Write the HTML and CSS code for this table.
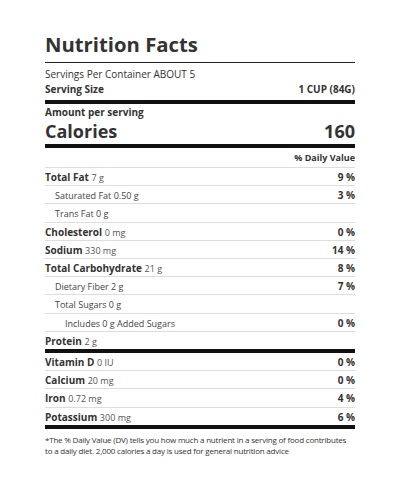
FILE: index.html
```html
<!DOCTYPE html>
<html>
<head>
<meta charset="utf-8">
<link rel="stylesheet" href="styles.css">
</head>
<body>
<div class="label">
  <h1 class="title">Nutrition Facts</h1>
  <div class="servings">Servings Per Container ABOUT 5</div>
  <div class="serving-size"><span>Serving Size</span><span>1 CUP (84G)</span></div>
  <div class="amount">Amount per serving</div>
  <div class="calories"><span>Calories</span><span>160</span></div>
  <div class="dv-head">% Daily Value</div>
  <div class="row"><span><b>Total Fat</b> <span class="amt">7 g</span></span><b>9 %</b></div>
  <div class="row sub"><span>Saturated Fat 0.50 g</span><b>3 %</b></div>
  <div class="row sub"><span>Trans Fat 0 g</span></div>
  <div class="row"><span><b>Cholesterol</b> <span class="amt">0 mg</span></span><b>0 %</b></div>
  <div class="row"><span><b>Sodium</b> <span class="amt">330 mg</span></span><b>14 %</b></div>
  <div class="row"><span><b>Total Carbohydrate</b> <span class="amt">21 g</span></span><b>8 %</b></div>
  <div class="row sub"><span>Dietary Fiber 2 g</span><b>7 %</b></div>
  <div class="row sub"><span>Total Sugars 0 g</span></div>
  <div class="row sub2"><span>Includes 0 g Added Sugars</span><b>0 %</b></div>
  <div class="row last"><span><b>Protein</b> <span class="amt">2 g</span></span></div>
  <div class="row"><span><b>Vitamin D</b> <span class="amt small">0 IU</span></span><b>0 %</b></div>
  <div class="row"><span><b>Calcium</b> <span class="amt">20 mg</span></span><b>0 %</b></div>
  <div class="row"><span><b>Iron</b> <span class="amt">0.72 mg</span></span><b>4 %</b></div>
  <div class="row last"><span><b>Potassium</b> <span class="amt">300 mg</span></span><b>6 %</b></div>
  <p class="note">*The % Daily Value (DV) tells you how much a nutrient in a serving of food contributes to a daily diet. 2,000 calories a day is used for general nutrition advice</p>
</div>
</body>
</html>
```
FILE: styles.css
```css
html, body {
  margin: 0;
  padding: 0;
  background: #fff;
}
body {
  font-family: "Open Sans", "DejaVu Sans", sans-serif;
  color: #333;
}
.label {
  width: 310px;
  margin-left: 45px;
  padding-top: 30px;
}
.title {
  margin: 0;
  font-size: 20.3px;
  font-weight: 700;
  line-height: 28px;
  padding-bottom: 4px;
  border-bottom: 1px solid #222;
}
.servings {
  font-size: 10px;
  line-height: 15px;
  padding-top: 4px;
}
.serving-size {
  display: flex;
  justify-content: space-between;
  font-size: 10px;
  font-weight: 700;
  line-height: 15px;
  padding-bottom: 3px;
  border-bottom: 4px solid #111;
}
.amount {
  font-size: 10px;
  font-weight: 700;
  line-height: normal;
  padding-top: 1px;
}
.calories {
  display: flex;
  justify-content: space-between;
  font-size: 18px;
  font-weight: 700;
  line-height: normal;
  padding-bottom: 1px;
  border-bottom: 4px solid #111;
}
.dv-head {
  text-align: right;
  font-size: 9px;
  font-weight: 700;
  line-height: 18px;
  padding-top: 1px;
  border-bottom: 1px solid #ddd;
}
.row {
  display: flex;
  justify-content: space-between;
  align-items: baseline;
  font-size: 10px;
  line-height: 15.2px;
  padding-top: 2px;
  border-bottom: 1px solid #ddd;
}
.row b {
  font-weight: 700;
}
.row.sub {
  padding-left: 10px;
  font-size: 9px;
  color: #444;
}
.row.sub b {
  font-size: 10px;
  color: #333;
}
.row.sub2 {
  padding-left: 20px;
  font-size: 9px;
  color: #444;
}
.row.sub2 b {
  font-size: 10px;
  color: #333;
}
.row.last {
  border-bottom: 4px solid #111;
}
.amt {
  font-size: 9px;
  color: #555;
}
.note {
  margin: 5px 0 0;
  font-size: 8px;
  letter-spacing: -0.2px;
  line-height: 11px;
  color: #333;
}
```
